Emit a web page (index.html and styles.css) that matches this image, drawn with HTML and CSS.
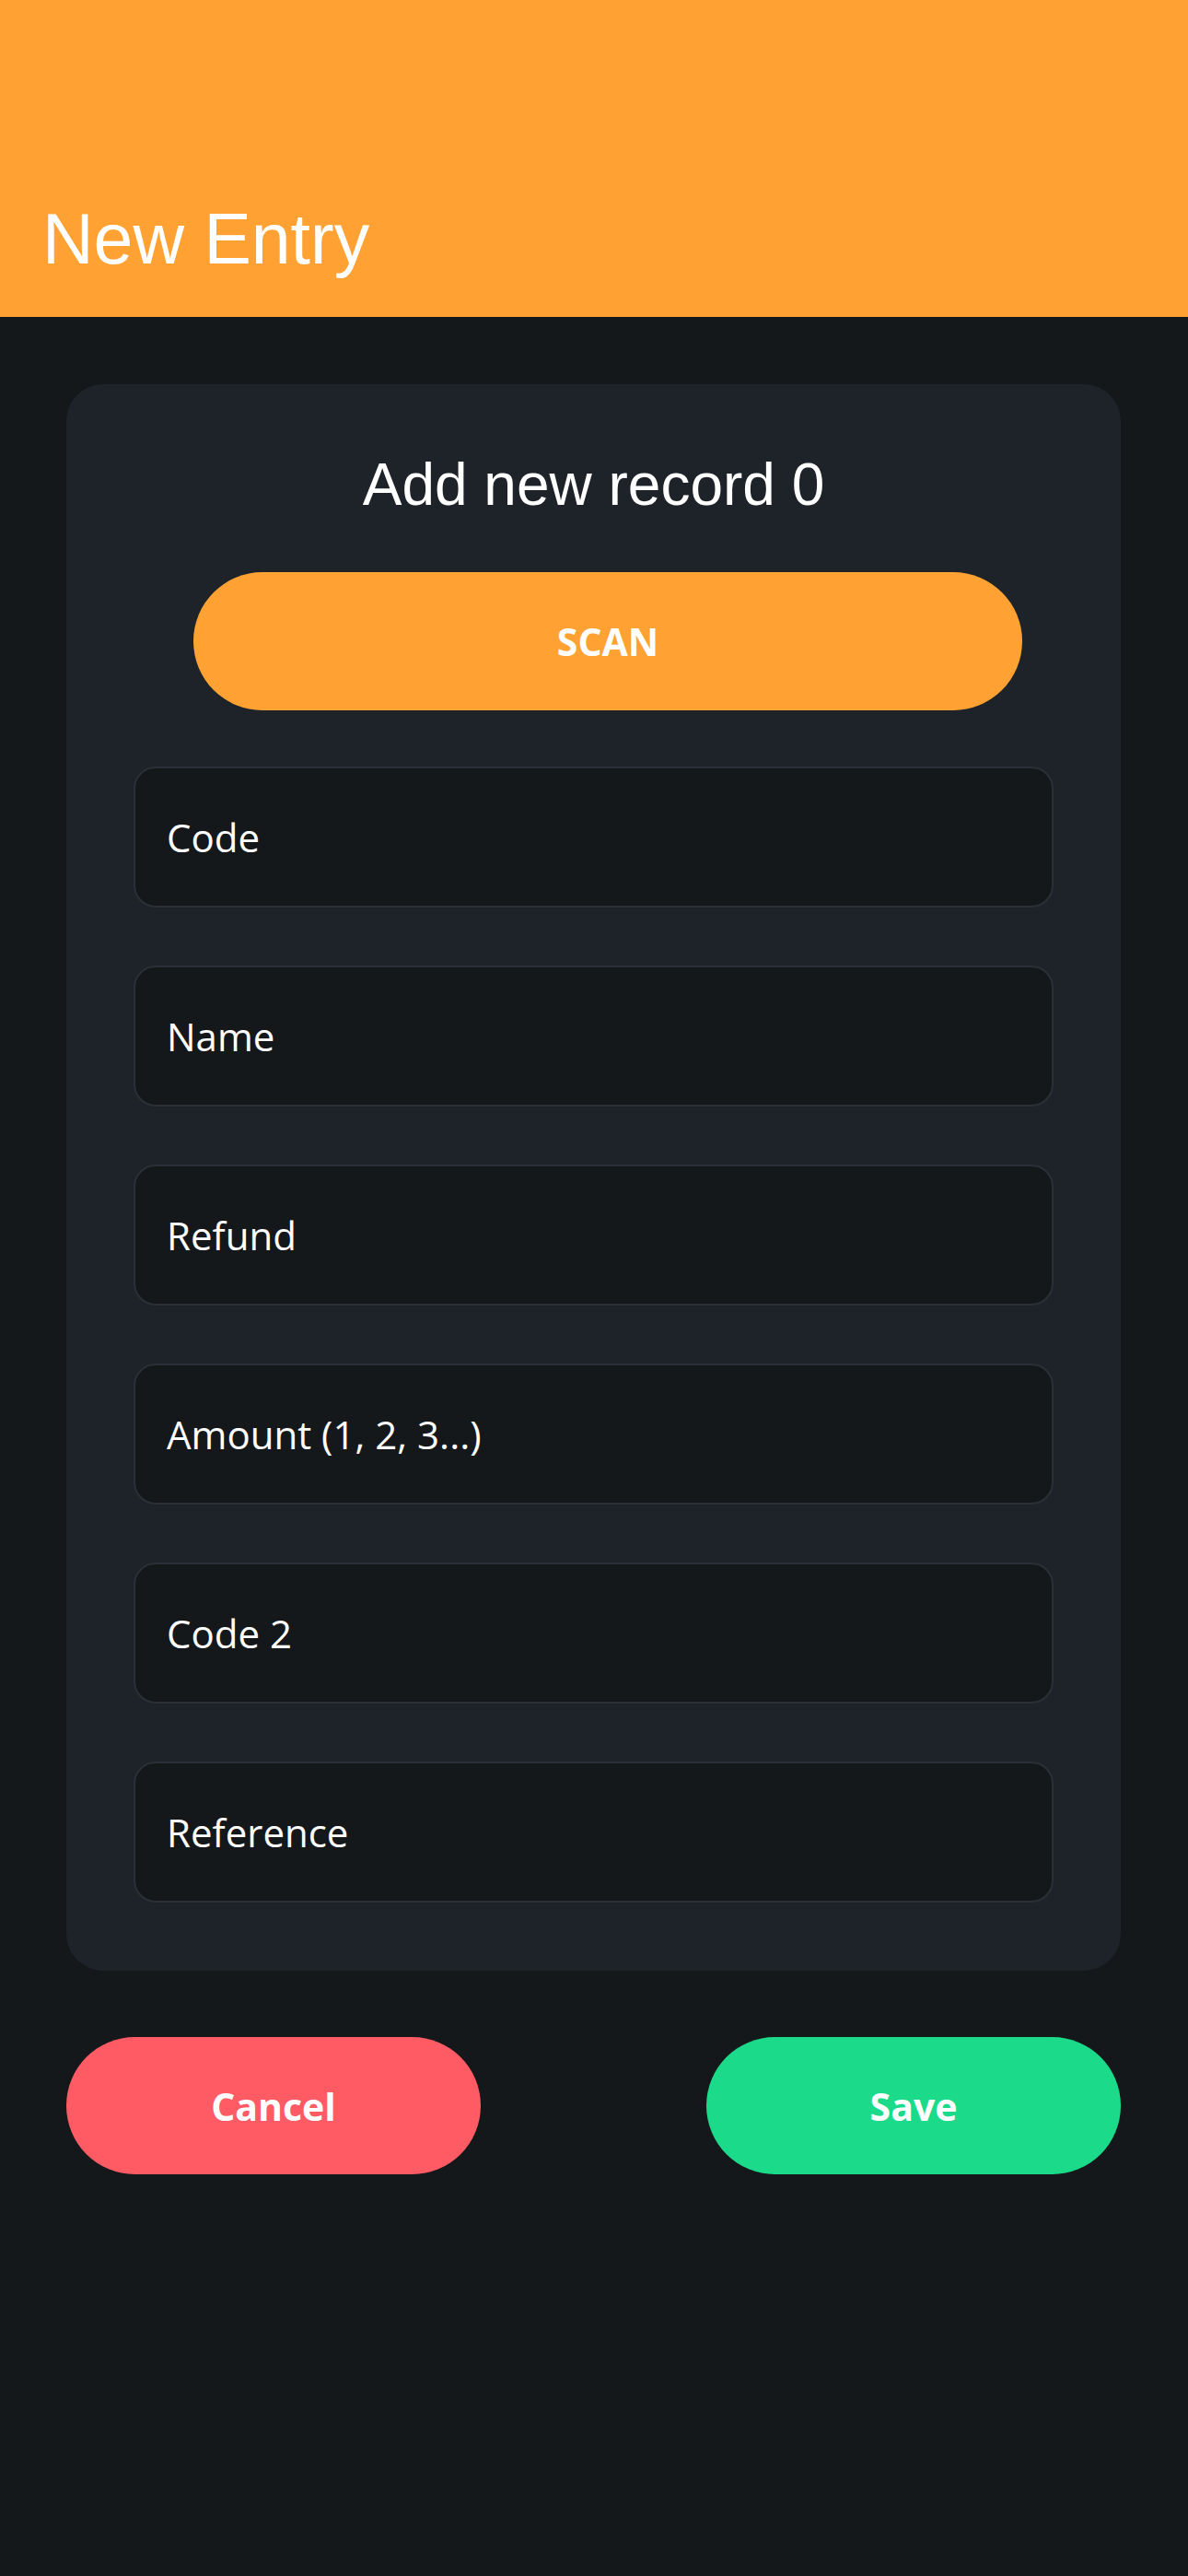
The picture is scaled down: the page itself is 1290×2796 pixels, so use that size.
FILE: index.html
```html
<!DOCTYPE html>
<html lang="en">
<head>
<meta charset="utf-8">
<title>New Entry</title>
<link rel="stylesheet" href="styles.css">
</head>
<body>
<header class="app-bar">
  <h1 class="app-title">New Entry</h1>
</header>
<main class="content">
  <section class="card">
    <h2 class="card-title">Add new record 0</h2>
    <button class="btn btn-scan" type="button">SCAN</button>
    <div class="fields">
      <div class="field"><span class="field-label">Code</span></div>
      <div class="field"><span class="field-label">Name</span></div>
      <div class="field"><span class="field-label">Refund</span></div>
      <div class="field"><span class="field-label">Amount (1, 2, 3...)</span></div>
      <div class="field"><span class="field-label">Code 2</span></div>
      <div class="field"><span class="field-label">Reference</span></div>
    </div>
  </section>
  <div class="actions">
    <button class="btn btn-cancel" type="button">Cancel</button>
    <button class="btn btn-save" type="button">Save</button>
  </div>
</main>
</body>
</html>
```

FILE: styles.css
```css
* {
  box-sizing: border-box;
}

html, body {
  margin: 0;
  padding: 0;
}

body {
  width: 1290px;
  min-height: 2796px;
  background: #15181b;
  color: #ffffff;
  font-family: "Open Sans", "Noto Sans", sans-serif;
}

.app-bar {
  height: 344px;
  background: #ffa233;
  padding: 215px 0 0 46px;
}

.app-title {
  margin: 0;
  font-family: "Liberation Sans", Arial, sans-serif;
  font-weight: 400;
  font-size: 77px;
  line-height: 88px;
  color: #ffffff;
}

.content {
  padding: 73px 73px 0 72px;
}

.card {
  background: #1e2329;
  border-radius: 40px;
  padding: 72px 73px 74px 73px;
  display: flex;
  flex-direction: column;
}

.card-title {
  margin: 0;
  text-align: center;
  font-family: "Liberation Sans", Arial, sans-serif;
  font-weight: 400;
  font-size: 64px;
  line-height: 74px;
  color: #ffffff;
}

.btn {
  border: none;
  border-radius: 999px;
  color: #ffffff;
  font-family: "Open Sans", "Noto Sans", sans-serif;
  font-weight: 700;
  font-size: 41px;
  padding: 0;
  cursor: pointer;
  display: flex;
  align-items: center;
  justify-content: center;
}

.btn-scan {
  margin: 58px 34px 0 65px;
  height: 150px;
  background: #ffa233;
}

.fields {
  margin-top: 61px;
  display: flex;
  flex-direction: column;
  gap: 63px;
}

.field {
  height: 153px;
  background: #15181b;
  border: 2px solid #2b3038;
  border-radius: 24px;
  padding: 0 34px;
  display: flex;
  align-items: center;
}

.field-label {
  font-size: 42px;
  font-weight: 500;
  color: #ffffff;
}

.actions {
  margin-top: 72px;
  display: flex;
  justify-content: space-between;
}

.btn-cancel,
.btn-save {
  width: 450px;
  height: 149px;
}

.btn-cancel {
  background: #ff5b65;
}

.btn-save {
  background: #1bdb8b;
}
```
